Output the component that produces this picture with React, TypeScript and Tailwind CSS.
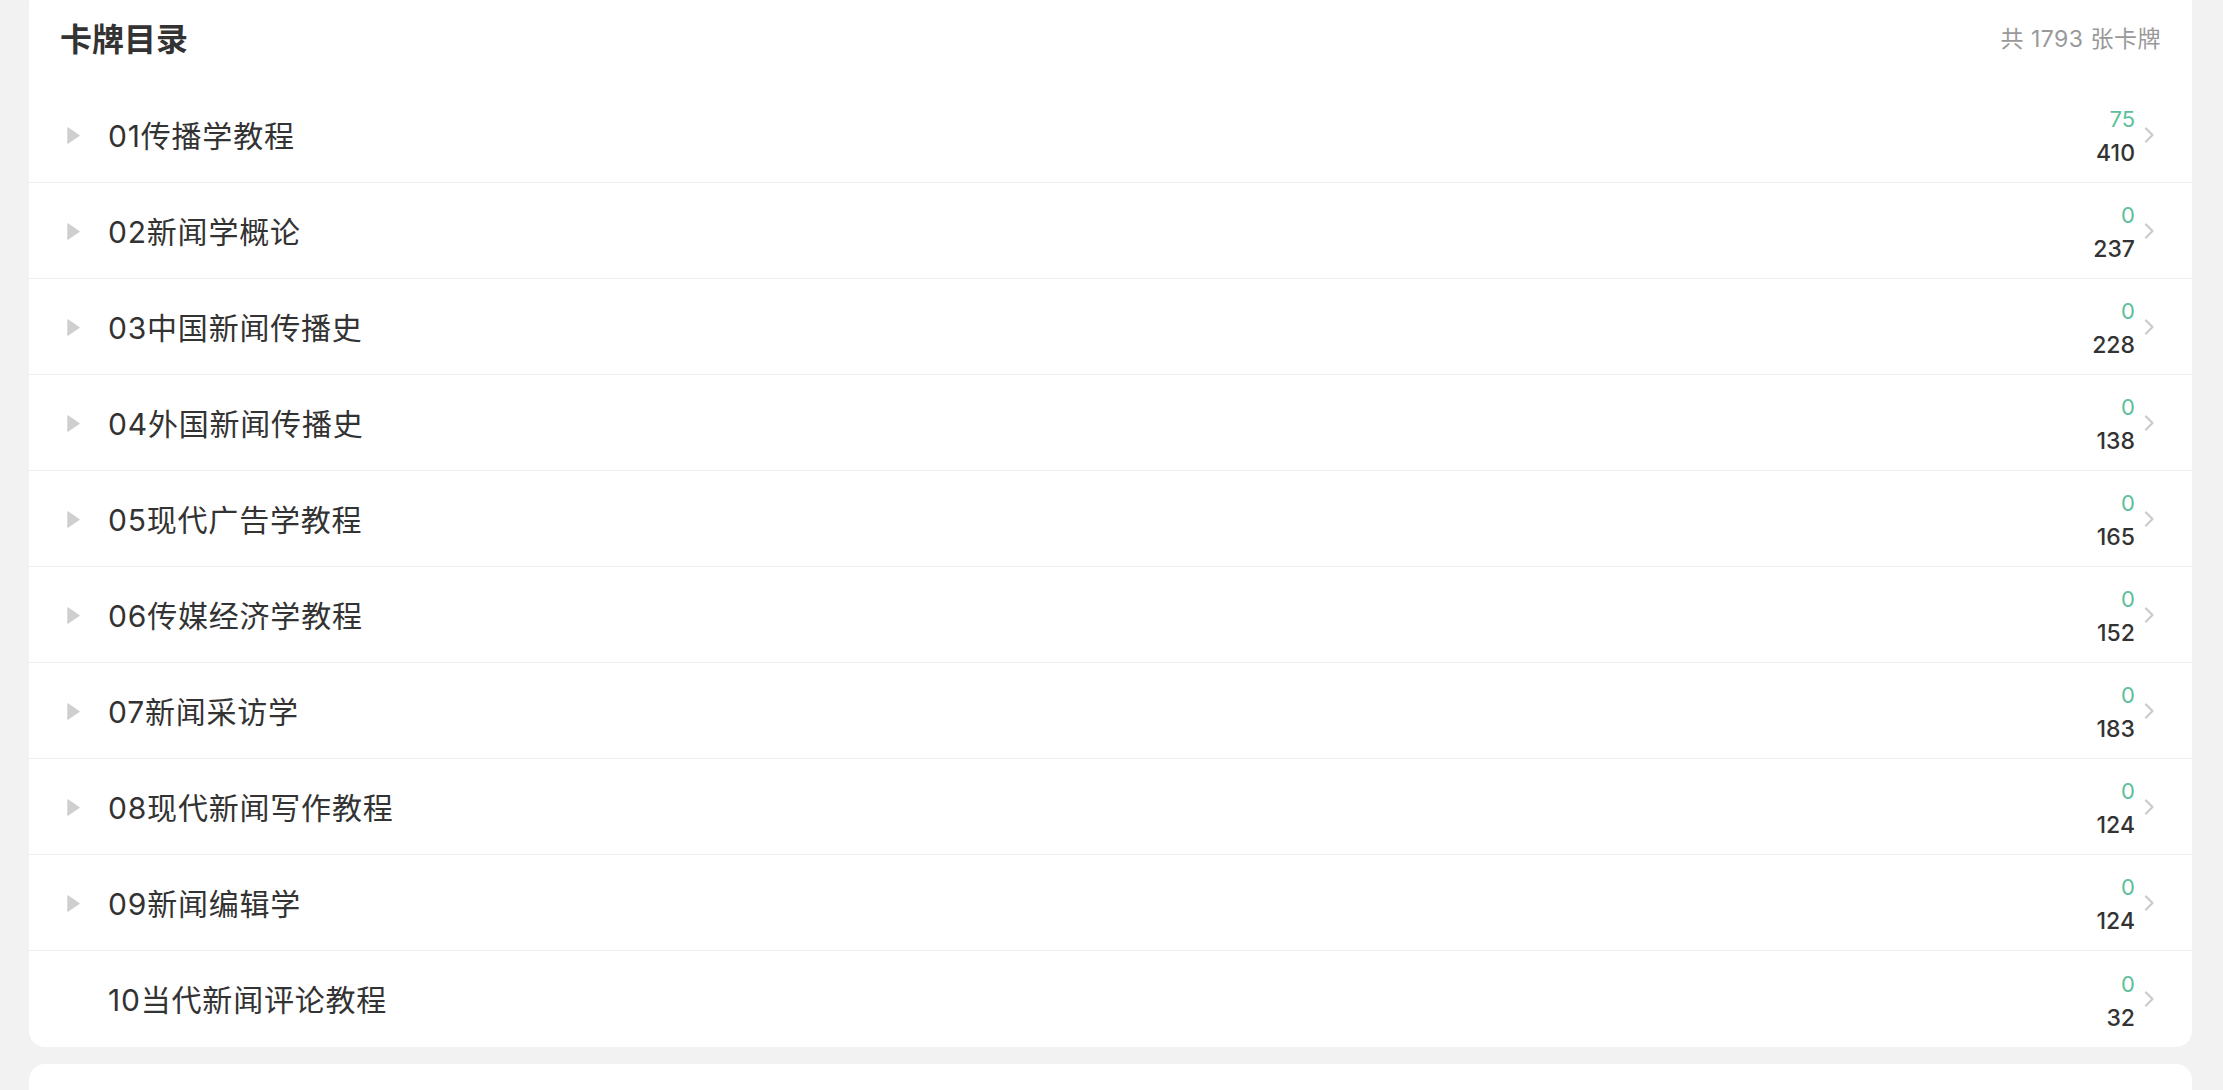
const FONT = { fontFamily: 'Inter, "Noto Sans CJK SC", sans-serif' };

interface Deck {
    name: string;
    learned: number;
    total: number;
    expandable: boolean;
}

const DECKS: Deck[] = [
    { name: '01传播学教程', learned: 75, total: 410, expandable: true },
    { name: '02新闻学概论', learned: 0, total: 237, expandable: true },
    { name: '03中国新闻传播史', learned: 0, total: 228, expandable: true },
    { name: '04外国新闻传播史', learned: 0, total: 138, expandable: true },
    { name: '05现代广告学教程', learned: 0, total: 165, expandable: true },
    { name: '06传媒经济学教程', learned: 0, total: 152, expandable: true },
    { name: '07新闻采访学', learned: 0, total: 183, expandable: true },
    { name: '08现代新闻写作教程', learned: 0, total: 124, expandable: true },
    { name: '09新闻编辑学', learned: 0, total: 124, expandable: true },
    { name: '10当代新闻评论教程', learned: 0, total: 32, expandable: false },
];

function Caret() {
    return (
        <svg width="13" height="17" viewBox="0 0 13 17">
            <polygon points="1,1 12,8.5 1,16" fill="#cfcfcf" stroke="#cfcfcf" strokeWidth="1.5" strokeLinejoin="round" />
        </svg>
    );
}

function Chevron() {
    return (
        <svg width="10" height="16" viewBox="0 0 10 16">
            <polyline points="2,1.5 8.5,8 2,14.5" fill="none" stroke="#cccccc" strokeWidth="2.2" strokeLinecap="round" strokeLinejoin="round" />
        </svg>
    );
}

function DeckRow({ deck, last }: { deck: Deck; last: boolean }) {
    return (
        <div className={`flex items-center h-[96px] ${last ? '' : 'border-b border-[#eeeeee]'}`}>
            <div className="w-[79px] pl-[38px] flex items-center pt-[2px]">
                {deck.expandable && <Caret />}
            </div>
            <div className="flex-1 text-[30px] text-[#333333] pt-[3px] tracking-[0.8px]">{deck.name}</div>
            <div className="flex flex-col items-end pt-[3px]">
                <span className="text-[22px] leading-[34px] text-[#5cbf9b]">{deck.learned}</span>
                <span className="text-[23px] leading-[34px] font-medium text-[#333333]">{deck.total}</span>
            </div>
            <div className="pl-[9px] pr-[38px] flex items-center">
                <Chevron />
            </div>
        </div>
    );
}

export default function App() {
    return (
        <div className="min-h-screen bg-[#f2f2f2] px-[29px] pr-[31px] overflow-hidden" style={FONT}>
            <div className="bg-white rounded-[16px] -mt-[12px]">
                <div className="flex items-center justify-between h-[99px] px-[31px] pt-[4px]">
                    <div className="text-[32px] font-semibold text-[#333333]">卡牌目录</div>
                    <div className="text-[23px] text-[#999999] tracking-[0.5px]">共 1793 张卡牌</div>
                </div>
                {DECKS.map((d, i) => (
                    <DeckRow key={d.name} deck={d} last={i === DECKS.length - 1} />
                ))}
            </div>
            <div className="bg-white rounded-[16px] mt-[17px] h-[200px]" />
        </div>
    );
}
